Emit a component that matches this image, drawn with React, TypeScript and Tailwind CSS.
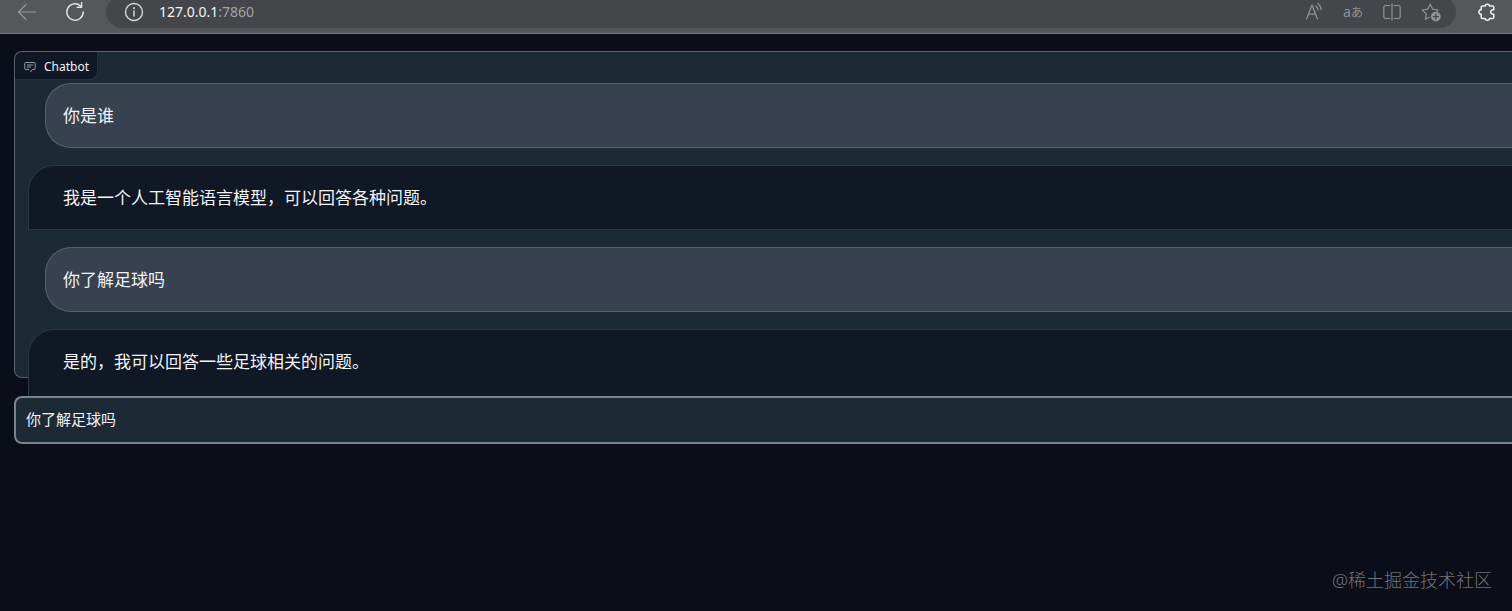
import { useState } from "react";
import type { ReactNode } from "react";
import clsx from "clsx";

type Message = { role: "user" | "bot"; text: string };

const MESSAGES: Message[] = [
  { role: "user", text: "你是谁" },
  { role: "bot", text: "我是一个人工智能语言模型，可以回答各种问题。" },
  { role: "user", text: "你了解足球吗" },
  { role: "bot", text: "是的，我可以回答一些足球相关的问题。" },
];

export default function App() {
  return (
    <div className="flex min-h-screen flex-col overflow-hidden bg-[#0b0e19] font-['Noto_Sans','Noto_Sans_CJK_SC',sans-serif] text-[#f1f3f6]">
      <BrowserBar />
      <main className="flex flex-1 flex-col gap-[18px] pt-[17px] pl-[14px]">
        <Chatbot messages={MESSAGES} />
        <PromptBox />
      </main>
      <footer className="flex justify-end px-5 pb-[17px] text-[18px] leading-7 font-light text-[#71747c]">
        @稀土掘金技术社区
      </footer>
    </div>
  );
}

function BrowserBar() {
  return (
    <header className="flex h-[34px] items-start overflow-hidden border-b border-[#7b7d80] bg-[#56575b]">
      <div className="-mt-1 flex h-8 flex-1 items-center">
        <div className="flex w-[106px] items-center gap-7 pl-[17px]">
          <IconButton label="Back" className="text-[#96979a]">
            <path d="M18.5 10H1.5M9 2.5 1.5 10 9 17.5" />
          </IconButton>
          <IconButton label="Refresh" className="text-[#e6e6e7]">
            <path strokeWidth="1.4" d="M18.2 10a8.2 8.2 0 1 1-2.6-6" />
            <path strokeWidth="1.4" d="M16.6 .8v4.4h-4.4" />
          </IconButton>
        </div>
        <div className="flex h-8 flex-1 items-center rounded-full bg-[#454649] pr-[15px] pl-[18px]">
          <IconButton label="Site information" className="text-[#d5d5d6]">
            <circle cx="10" cy="10" r="8.5" strokeWidth="1.4" />
            <path d="M10 9v5" strokeWidth="1.5" />
            <path d="M10 6v.3" strokeWidth="1.9" />
          </IconButton>
          <button type="button" className="ml-[15px] flex-1 text-left text-[14px] leading-6 text-[#a3a4a6]">
            <span className="text-[#f4f4f4]">127.0.0.1</span>:7860
          </button>
          <div className="flex items-center gap-[19px] text-[#929396]">
            <IconButton label="Read aloud">
              <path d="m2.5 17 5.500-14 5.500 14M4.500 12.200h7" />
              <path d="M12 4.200c1.100.9 1.800 2.100 2 3.600M14 1.500c1.900 1.500 3 3.600 3.200 6.100" />
            </IconButton>
            <button
              type="button"
              aria-label="Translate"
              className="flex w-5 items-baseline justify-center text-[14px] leading-5"
            >
              a<span className="text-[12px]">あ</span>
            </button>
            <IconButton label="Split screen">
              <path d="M8 3.5H3.5A1.7 1.7 0 0 0 1.8 5.2v9.6a1.7 1.7 0 0 0 1.7 1.7H8M12 3.5h4.5a1.7 1.7 0 0 1 1.7 1.7v9.6a1.7 1.7 0 0 1-1.7 1.7H12M10 2v16" />
            </IconButton>
            <IconButton label="Add to favorites">
              <path d="M8.2 15.2 4.4 17.3l.9-5.4-4-3.9 5.4-.8 2.5-5 2.5 5 5.4.8-1.3 1.3" />
              <circle cx="14.8" cy="14.6" r="4.9" fill="currentColor" stroke="none" />
              <path d="M14.8 12v5.2M12.2 14.6h5.2" stroke="#454649" />
            </IconButton>
          </div>
        </div>
        <div className="flex w-14 items-center justify-center pl-1.5">
          <IconButton label="Extensions" className="text-[#f0f0f1]">
            <path
              strokeWidth="1.5"
              d="M5.5 4h2.6a2.3 2.3 0 0 1 4.5 0h2.9a1.3 1.3 0 0 1 1.3 1.3v2.4h-.7a2.3 2.3 0 0 0 0 4.6h.7v2.9a1.3 1.3 0 0 1-1.3 1.3h-2.9a2.3 2.3 0 0 1-4.5 0H5.5a1.3 1.3 0 0 1-1.3-1.3v-2.9a2.3 2.3 0 0 1 0-4.6V5.3A1.3 1.3 0 0 1 5.5 4z"
            />
          </IconButton>
        </div>
      </div>
    </header>
  );
}

function IconButton({ label, className, children }: { label: string; className?: string; children: ReactNode }) {
  return (
    <button type="button" aria-label={label} className={clsx("shrink-0", className)}>
      <svg
        viewBox="0 0 20 20"
        className="size-5 overflow-visible"
        fill="none"
        stroke="currentColor"
        strokeWidth="1.2"
        strokeLinecap="round"
        strokeLinejoin="round"
      >
        {children}
      </svg>
    </button>
  );
}

function Chatbot({ messages }: { messages: Message[] }) {
  return (
    // The log is taller than its frame, the last answer runs out under the prompt box.
    <section className="relative h-[327px] rounded-l-lg border border-r-0 border-[#59636f] bg-[#1e2936]">
      <h2 className="absolute top-0 left-0 flex h-7 items-center gap-2 rounded-tl-lg rounded-br-lg border-r border-b border-[#28323f] bg-[#101725] pt-0.5 pr-2 pl-[9px] text-[12px]">
        <svg viewBox="0 0 12 12" className="size-3" fill="none" stroke="#a5abb5" strokeWidth="0.9">
          <path d="M6.5 11 8.3 8.5h1.9a1 1 0 0 0 1-1v-5a1 1 0 0 0-1-1H1.8a1 1 0 0 0-1 1v5a1 1 0 0 0 1 1h3.4" />
          <path d="M3 4h6M3 6h4" />
        </svg>
        Chatbot
      </h2>
      <ul className="flex flex-col gap-[17px] pt-[31px] pl-[13px]">
        {messages.map((m, i) => (
          <li
            key={i}
            className={clsx(
              "border border-r-0 py-[19px] text-[17px] leading-[25px] last:pb-6",
              m.role === "user"
                ? "ml-[17px] rounded-l-[26px] border-[#566170] bg-[#374150] pl-[17px]"
                : "rounded-tl-[26px] border-[#2c3644] bg-[#101725] pl-[34px]",
            )}
          >
            {m.text}
          </li>
        ))}
      </ul>
    </section>
  );
}

function PromptBox() {
  const [value, setValue] = useState("你了解足球吗");

  return (
    <input
      type="text"
      aria-label="Message"
      value={value}
      onChange={(e) => setValue(e.target.value)}
      className="relative h-12 w-full rounded-l-lg border-2 border-r-0 border-[#7b838e] bg-[#1e2936] px-[10px] pb-1 text-[15px] outline-none"
    />
  );
}
